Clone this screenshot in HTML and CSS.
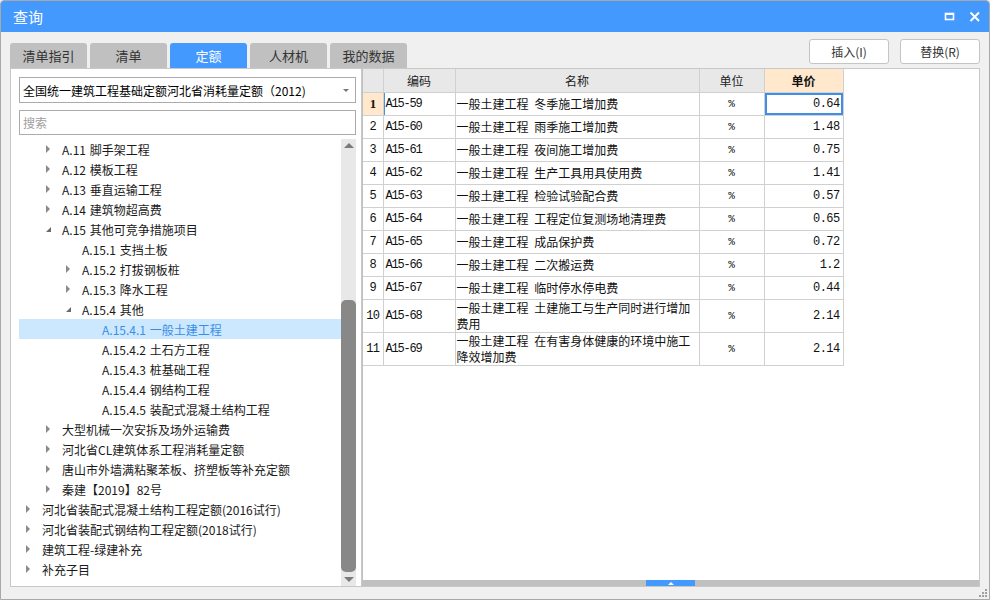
FILE: index.html
```html
<!DOCTYPE html>
<html lang="zh">
<head>
<meta charset="utf-8">
<title>查询</title>
<link rel="stylesheet" href="styles.css">
</head>
<body>
<div class="window">
  <div class="titlebar">
    <span class="title">查询</span>
    <div class="ctrls">
      <svg class="ico" width="12" height="12" viewBox="0 0 12 12"><rect x="1.5" y="2.5" width="8" height="6" fill="none" stroke="#fff" stroke-width="1.6"/><rect x="1" y="2" width="9" height="2" fill="#fff"/></svg>
      <svg class="ico" width="12" height="12" viewBox="0 0 12 12"><path d="M1.5 1.5 L10 10 M10 1.5 L1.5 10" stroke="#fff" stroke-width="2"/></svg>
    </div>
  </div>
  <div class="toprow">
    <div class="tabs">
      <div class="tab">清单指引</div>
      <div class="tab">清单</div>
      <div class="tab active">定额</div>
      <div class="tab">人材机</div>
      <div class="tab">我的数据</div>
    </div>
    <div class="btns">
      <div class="btn">插入(I)</div>
      <div class="btn">替换(R)</div>
    </div>
  </div>
  <div class="main">
    <div class="left">
      <div class="select"><span>全国统一建筑工程基础定额河北省消耗量定额（2012)</span><i class="caret"></i></div>
      <div class="search">搜索</div>
      <div class="tree">
        <div class="list">
          <div class="row l2"><i class="tw c"></i>A.11 脚手架工程</div>
          <div class="row l2"><i class="tw c"></i>A.12 模板工程</div>
          <div class="row l2"><i class="tw c"></i>A.13 垂直运输工程</div>
          <div class="row l2"><i class="tw c"></i>A.14 建筑物超高费</div>
          <div class="row l2"><i class="tw e"></i>A.15 其他可竞争措施项目</div>
          <div class="row l3"><i class="tw"></i>A.15.1 支挡土板</div>
          <div class="row l3"><i class="tw c"></i>A.15.2 打拔钢板桩</div>
          <div class="row l3"><i class="tw c"></i>A.15.3 降水工程</div>
          <div class="row l3"><i class="tw e"></i>A.15.4 其他</div>
          <div class="row l4 sel"><i class="tw"></i>A.15.4.1 一般土建工程</div>
          <div class="row l4"><i class="tw"></i>A.15.4.2 土石方工程</div>
          <div class="row l4"><i class="tw"></i>A.15.4.3 桩基础工程</div>
          <div class="row l4"><i class="tw"></i>A.15.4.4 钢结构工程</div>
          <div class="row l4"><i class="tw"></i>A.15.4.5 装配式混凝土结构工程</div>
          <div class="row l2"><i class="tw c"></i>大型机械一次安拆及场外运输费</div>
          <div class="row l2"><i class="tw c"></i>河北省CL建筑体系工程消耗量定额</div>
          <div class="row l2"><i class="tw c"></i>唐山市外墙满粘聚苯板、挤塑板等补充定额</div>
          <div class="row l2"><i class="tw c"></i>秦建【2019】82号</div>
          <div class="row l1"><i class="tw c"></i>河北省装配式混凝土结构工程定额(2016试行)</div>
          <div class="row l1"><i class="tw c"></i>河北省装配式钢结构工程定额(2018试行)</div>
          <div class="row l1"><i class="tw c"></i>建筑工程-绿建补充</div>
          <div class="row l1"><i class="tw c"></i>补充子目</div>
        </div>
        <div class="vscroll">
          <i class="arr up"></i>
          <div class="vtrack"><div class="vthumb"></div></div>
          <i class="arr down"></i>
        </div>
      </div>
    </div>
    <div class="grid">
      <div class="gridbody">
        <table class="tbl">
          <colgroup><col class="c0"><col class="c1"><col class="c2"><col class="c3"><col class="c4"></colgroup>
          <thead>
            <tr><th></th><th>编码</th><th>名称</th><th>单位</th><th class="hl">单价</th></tr>
          </thead>
          <tbody>
            <tr><td class="rn cur">1</td><td class="code curcode">A15-59</td><td class="nm">一般土建工程 冬季施工增加费</td><td class="un">%</td><td class="pr selcell">0.64</td></tr>
            <tr><td class="rn">2</td><td class="code">A15-60</td><td class="nm">一般土建工程 雨季施工增加费</td><td class="un">%</td><td class="pr">1.48</td></tr>
            <tr><td class="rn">3</td><td class="code">A15-61</td><td class="nm">一般土建工程 夜间施工增加费</td><td class="un">%</td><td class="pr">0.75</td></tr>
            <tr><td class="rn">4</td><td class="code">A15-62</td><td class="nm">一般土建工程 生产工具用具使用费</td><td class="un">%</td><td class="pr">1.41</td></tr>
            <tr><td class="rn">5</td><td class="code">A15-63</td><td class="nm">一般土建工程 检验试验配合费</td><td class="un">%</td><td class="pr">0.57</td></tr>
            <tr><td class="rn">6</td><td class="code">A15-64</td><td class="nm">一般土建工程 工程定位复测场地清理费</td><td class="un">%</td><td class="pr">0.65</td></tr>
            <tr><td class="rn">7</td><td class="code">A15-65</td><td class="nm">一般土建工程 成品保护费</td><td class="un">%</td><td class="pr">0.72</td></tr>
            <tr><td class="rn">8</td><td class="code">A15-66</td><td class="nm">一般土建工程 二次搬运费</td><td class="un">%</td><td class="pr">1.2</td></tr>
            <tr><td class="rn">9</td><td class="code">A15-67</td><td class="nm">一般土建工程 临时停水停电费</td><td class="un">%</td><td class="pr">0.44</td></tr>
            <tr class="tall"><td class="rn">10</td><td class="code">A15-68</td><td class="nm">一般土建工程 土建施工与生产同时进行增加<br>费用</td><td class="un">%</td><td class="pr">2.14</td></tr>
            <tr class="tall"><td class="rn">11</td><td class="code">A15-69</td><td class="nm">一般土建工程 在有害身体健康的环境中施工<br>降效增加费</td><td class="un">%</td><td class="pr">2.14</td></tr>
          </tbody>
        </table>
      </div>
      <div class="hscroll"><div class="hthumb"><i class="htri"></i></div></div>
    </div>
  </div>
  <div class="footer">
    <svg width="10" height="10" viewBox="0 0 10 10" class="grip">
      <rect x="7" y="1" width="2" height="2" fill="#a0a0a0"/>
      <rect x="4" y="4" width="2" height="2" fill="#a0a0a0"/>
      <rect x="7" y="4" width="2" height="2" fill="#a0a0a0"/>
      <rect x="1" y="7" width="2" height="2" fill="#a0a0a0"/>
      <rect x="4" y="7" width="2" height="2" fill="#a0a0a0"/>
      <rect x="7" y="7" width="2" height="2" fill="#a0a0a0"/>
    </svg>
  </div>
</div>
</body>
</html>
```

FILE: styles.css
```css
* { box-sizing: border-box; }
html, body { margin: 0; padding: 0; }
body {
  width: 990px;
  height: 600px;
  overflow: hidden;
  font-family: "Noto Sans CJK SC", "Microsoft YaHei", sans-serif;
  font-size: 12px;
  color: #1a1a1a;
  background: #f0f0f0;
}
.window {
  width: 990px;
  height: 600px;
  border: 1px solid #a8a8a8;
  border-radius: 4px 4px 0 0;
  background: #f0f0f0;
  display: flex;
  flex-direction: column;
  overflow: hidden;
}
.titlebar {
  height: 31px;
  flex: none;
  background: #4499ff;
  color: #fff;
  display: flex;
  align-items: center;
  padding: 0 8px 0 12px;
}
.title { font-size: 15px; line-height: 20px; }
.ctrls { margin-left: auto; display: flex; gap: 13px; align-items: center; }
.ico { display: block; }

.toprow {
  height: 36px;
  flex: none;
  display: flex;
  padding: 0 9px;
}
.tabs { display: flex; gap: 3px; align-self: flex-end; }
.tab {
  width: 77px;
  height: 25px;
  background: #c0c0c0;
  border-radius: 3px 3px 0 0;
  color: #333;
  font-size: 13px;
  display: flex;
  align-items: center;
  justify-content: center;
}
.tab.active { background: #4499ff; color: #fff; }
.btns { margin-left: auto; margin-top: 7px; display: flex; gap: 11px; padding-right: 0; }
.btn {
  width: 80px;
  height: 25px;
  background: #fff;
  border: 1px solid #c4c4c4;
  border-radius: 3px;
  color: #333;
  font-size: 12px;
  display: flex;
  align-items: center;
  justify-content: center;
}

.main {
  height: 519px;
  flex: none;
  display: flex;
  padding: 0 9px;
}
.left {
  width: 352px;
  flex: none;
  background: #fff;
  border: 1px solid #c8c8c8;
  padding: 8px 5px 0 8px;
  display: flex;
  flex-direction: column;
}
.select {
  height: 26px;
  border: 1px solid #ababab;
  display: flex;
  align-items: center;
  padding: 0 6px 0 3px;
  font-size: 12px;
  color: #000;
}
.caret {
  margin-left: auto;
  width: 0; height: 0;
  border-left: 3px solid transparent;
  border-right: 3px solid transparent;
  border-top: 3px solid #777;
}
.search {
  height: 25px;
  margin-top: 7px;
  border: 1px solid #ababab;
  display: flex;
  align-items: center;
  padding-left: 3px;
  color: #a0a0a0;
  font-size: 12px;
}
.tree {
  margin-top: 4px;
  height: 447px;
  display: flex;
}
.list { flex: 1; }
.row {
  height: 20px;
  display: flex;
  align-items: center;
  white-space: nowrap;
  font-size: 12px;
  color: #1a1a1a;
  word-spacing: 1px;
}
.row.sel { background: #cce8ff; color: #3a8ee6; }
.l1 { padding-left: 3px; }
.l2 { padding-left: 23px; }
.l3 { padding-left: 43px; }
.l4 { padding-left: 63px; }
.tw { width: 20px; height: 20px; flex: none; position: relative; }
.tw.c::after {
  content: "";
  position: absolute;
  left: 4px; top: 6px;
  border-left: 4px solid #8a8a8a;
  border-top: 4px solid transparent;
  border-bottom: 4px solid transparent;
}
.tw.e::after {
  content: "";
  position: absolute;
  left: 4px; top: 8px;
  border-bottom: 5px solid #6a6a6a;
  border-left: 5px solid transparent;
}
.vscroll {
  width: 15px;
  flex: none;
  background: #e8e8e8;
  display: flex;
  flex-direction: column;
  align-items: center;
}
.arr { width: 0; height: 0; flex: none; border-left: 5px solid transparent; border-right: 5px solid transparent; }
.arr.up { border-bottom: 5px solid #7a7a7a; margin-top: 4px; }
.arr.down { border-top: 5px solid #7a7a7a; margin: 2px 0 4px; }
.vtrack { flex: 1; width: 100%; display: flex; justify-content: center; padding-top: 152px; padding-bottom: 3px; }
.vthumb { width: 9px; background: #888; border-radius: 5px; flex: 1; }

.grid {
  flex: 1;
  background: #fff;
  border: 1px solid #c8c8c8;
  border-left-color: #c0c0c0;
  display: flex;
  flex-direction: column;
}
.gridbody { flex: 1; overflow: hidden; }
.tbl {
  border-collapse: collapse;
  table-layout: fixed;
  width: 480px;
}
.c0 { width: 20px; }
.c1 { width: 72px; }
.c2 { width: 244px; }
.c3 { width: 65px; }
.c4 { width: 79px; }
.tbl th {
  height: 23px;
  background: #e8e8e8;
  border: 1px solid #d0d0d0;
  border-top: none;
  font-weight: normal;
  font-size: 12px;
  color: #222;
  padding: 0;
  text-align: center;
}
.tbl th:first-child { border-left: none; }
.tbl th.hl { background: #ffe8cc; font-weight: bold; color: #111; }
.tbl td {
  height: 23px;
  border: 1px solid #d0d0d0;
  padding: 0;
  font-size: 12px;
  color: #111;
  white-space: nowrap;
  overflow: hidden;
}
.tbl td:first-child { border-left: none; }
.tbl tr.tall td { height: 33px; }
.rn {
  text-align: center;
  font-family: "Liberation Mono", monospace;
  font-size: 12px;
  color: #222;
  letter-spacing: -0.6px;
}
.rn.cur { background: #ffe8cc; font-weight: bold; font-family: "Liberation Serif", serif; font-size: 13px; }
.code {
  padding-left: 2px !important;
  font-family: "Liberation Mono", monospace;
  font-size: 12px;
  letter-spacing: -1.2px;
}
.curcode { box-shadow: inset 1px 0 0 #4a90e2; }
.nm { padding-left: 1px !important; line-height: 16px; word-spacing: 3px; }
.un { text-align: center; font-family: "Liberation Mono", monospace; font-size: 11px !important; }
.pr {
  text-align: right;
  padding-right: 3px !important;
  font-family: "Liberation Mono", monospace;
  font-size: 12px;
  letter-spacing: -0.6px;
}
.selcell { box-shadow: inset 0 0 0 2px #3f8fe8; }

.hscroll {
  height: 6px;
  flex: none;
  background: #c0c0c0;
  display: flex;
}
.hthumb {
  margin-left: 283px;
  width: 49px;
  background: #4499ff;
  display: flex;
  justify-content: center;
  align-items: center;
}
.htri {
  width: 0; height: 0;
  border-left: 3px solid transparent;
  border-right: 3px solid transparent;
  border-bottom: 3px solid #fff;
}

.footer {
  flex: 1;
  display: flex;
  justify-content: flex-end;
  align-items: flex-end;
  padding: 0 1px 1px 0;
}
.grip { display: block; }
```
